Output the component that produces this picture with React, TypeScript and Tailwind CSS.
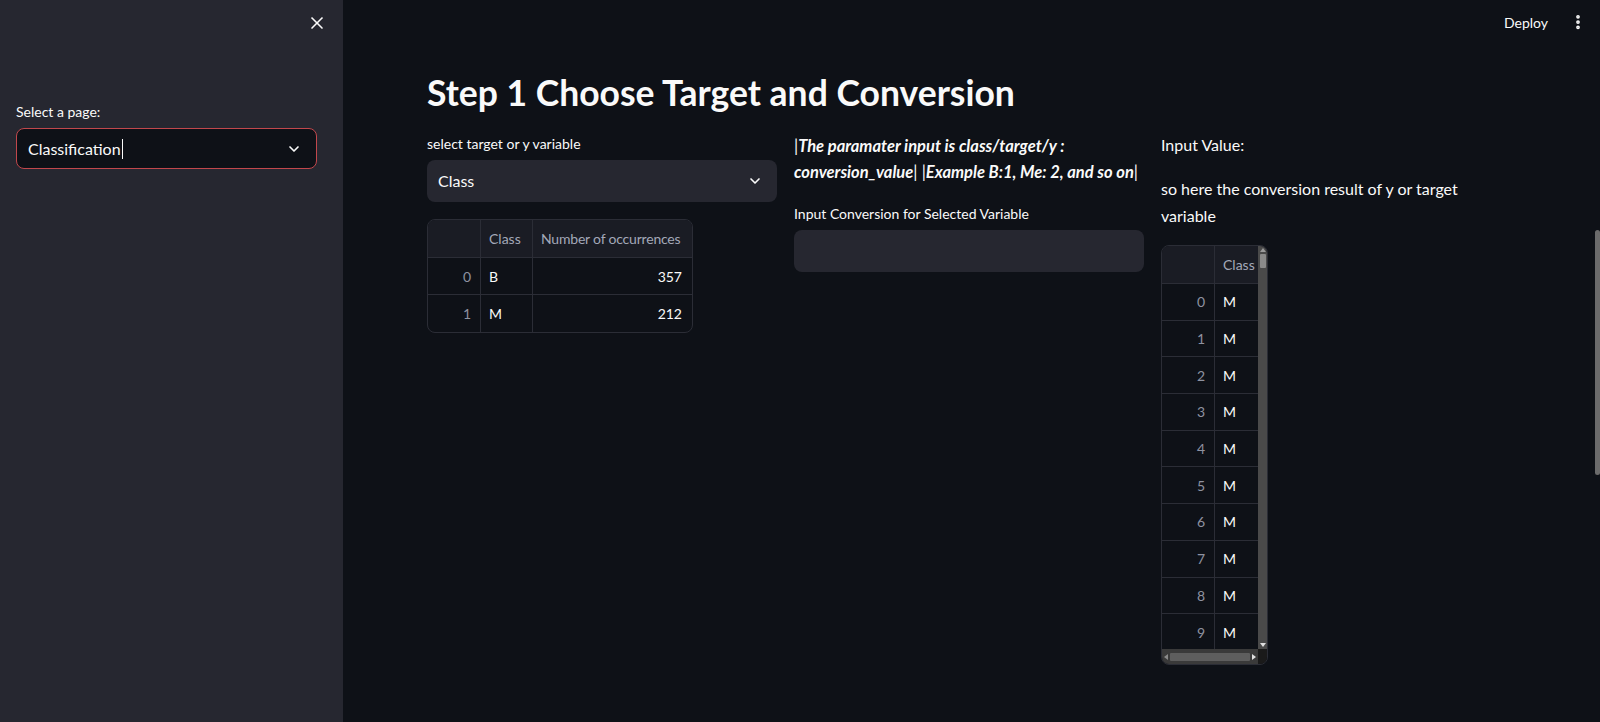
import React from 'react';
import { X, ChevronDown, EllipsisVertical } from 'lucide-react';

const font = { fontFamily: 'Lato, "Noto Sans", sans-serif' };

const counts = [
  { idx: 0, cls: 'B', n: 357 },
  { idx: 1, cls: 'M', n: 212 },
];

const converted = Array.from({ length: 10 }, (_, i) => i);

function Sidebar() {
  return (
    <aside className="w-[343px] shrink-0 bg-[#262730] h-[722px] flex flex-col">
      <div className="h-[46px] flex items-center justify-end pr-[16px]">
        <X size={20} strokeWidth={2} className="text-[#fafafa]" />
      </div>
      <div className="px-[16px] pt-[56px]">
        <div className="text-[14px] leading-[20px] text-[#fafafa]">Select a page:</div>
        <div className="mt-[6px] w-[301px] h-[41px] rounded-lg border border-[#c1474c] bg-[#0e1117] flex items-center justify-between pl-[11px] pr-[14px]">
          <span className="text-[16px] text-[#fafafa] flex items-center">
            Classification
            <span className="inline-block w-px h-[20px] bg-[#fafafa] ml-[1px]" />
          </span>
          <ChevronDown size={16} strokeWidth={2.5} className="text-[#fafafa]" />
        </div>
      </div>
    </aside>
  );
}

function CountsTable() {
  return (
    <div className="mt-[17px] w-[266px] rounded-lg border border-[#2b2d36] overflow-hidden text-[14px]">
      <div className="flex h-[38px] bg-[#1a1c24] border-b border-[#2b2d36] text-[#a3a8b8]">
        <div className="w-[53px] border-r border-[#2b2d36]" />
        <div className="w-[52px] border-r border-[#2b2d36] flex items-center px-[8px]">Class</div>
        <div className="flex-1 flex items-center pl-[8px] whitespace-nowrap tracking-[-0.2px]">Number of occurrences</div>
      </div>
      {counts.map((r, i) => (
        <div key={r.idx} className={`flex h-[37px] ${i === 0 ? 'border-b border-[#2b2d36]' : ''}`}>
          <div className="w-[53px] border-r border-[#2b2d36] flex items-center justify-end pr-[9px] text-[#8e92a0]">{r.idx}</div>
          <div className="w-[52px] border-r border-[#2b2d36] flex items-center px-[8px] text-[#fafafa]">{r.cls}</div>
          <div className="flex-1 flex items-center justify-end pr-[10px] text-[#fafafa]">{r.n}</div>
        </div>
      ))}
    </div>
  );
}

function ConvertedTable() {
  return (
    <div className="mt-[16px] w-[107px] h-[420px] rounded-lg border border-[#2b2d36] overflow-hidden flex flex-col text-[14px]">
      <div className="flex flex-1 min-h-0">
        <div className="flex-1 flex flex-col overflow-hidden">
          <div className="flex h-[38px] shrink-0 bg-[#1a1c24] border-b border-[#2b2d36] text-[#a3a8b8]">
            <div className="w-[53px] border-r border-[#2b2d36]" />
            <div className="flex-1 flex items-center pl-[8px]">Class</div>
          </div>
          {converted.map((i) => (
            <div key={i} className="flex h-[36.7px] shrink-0 border-b border-[#2b2d36]">
              <div className="w-[53px] border-r border-[#2b2d36] flex items-center justify-end pr-[9px] text-[#8e92a0]">{i}</div>
              <div className="flex-1 flex items-center pl-[8px] text-[#fafafa]">M</div>
            </div>
          ))}
          <div className="flex flex-1">
            <div className="w-[53px] border-r border-[#2b2d36]" />
          </div>
        </div>
        <div className="w-[9px] bg-[#4a4a4a] flex flex-col items-center justify-between py-[2px]">
          <div className="flex flex-col items-center gap-[2px]">
            <div className="w-0 h-0 border-l-[3px] border-r-[3px] border-b-[4px] border-l-transparent border-r-transparent border-b-[#9a9a9a]" />
            <div className="w-[6px] h-[14px] bg-[#8a8a8a] rounded-[1px]" />
          </div>
          <div className="w-0 h-0 border-l-[3px] border-r-[3px] border-t-[4px] border-l-transparent border-r-transparent border-t-[#e0e0e0]" />
        </div>
      </div>
      <div className="h-[15px] flex">
        <div className="flex-1 bg-[#3a3a3a] flex items-center px-[2px] gap-[2px]">
          <div className="w-0 h-0 border-t-[3px] border-b-[3px] border-r-[4px] border-t-transparent border-b-transparent border-r-[#8a8a8a]" />
          <div className="flex-1 h-[8px] bg-[#5e5e5e] rounded-[1px]" />
          <div className="w-0 h-0 border-t-[3px] border-b-[3px] border-l-[4px] border-t-transparent border-b-transparent border-l-[#e0e0e0]" />
        </div>
        <div className="w-[9px] bg-[#1a1a1a]" />
      </div>
    </div>
  );
}

export default function App() {
  return (
    <div className="w-[1600px] h-[722px] flex bg-[#0e1117] text-[#fafafa] overflow-hidden" style={font}>
      <Sidebar />
      <main className="flex-1 flex flex-col">
        <header className="h-[44px] flex items-center justify-end gap-[21px] pr-[13px]">
          <span className="text-[14px] text-[#fafafa]">Deploy</span>
          <EllipsisVertical size={18} strokeWidth={3} className="text-[#fafafa]" />
        </header>
        <div className="flex flex-1">
          <div className="flex-1 pl-[84px] pr-[84px]">
            <h1 className="text-[35.5px] font-bold leading-[44px] text-[#fafafa] pt-[27px]">
              Step 1 Choose Target and Conversion
            </h1>
            <div className="grid grid-cols-3 gap-[17px] w-[1084px] mt-[17px]">
              <div className="pt-[2px]">
                <div className="text-[14px] leading-[20px]">select target or y variable</div>
                <div className="mt-[6px] h-[42px] rounded-lg bg-[#262730] flex items-center justify-between pl-[11px] pr-[14px]">
                  <span className="text-[16px]">Class</span>
                  <ChevronDown size={16} strokeWidth={2.5} />
                </div>
                <CountsTable />
              </div>
              <div className="pt-[1px]">
                <div className="text-[16.5px] leading-[26px] font-bold">
                  <div>
                    <span className="font-normal">|</span>
                    <em>The paramater input is class/target/y :</em>
                  </div>
                  <div>
                    <em>conversion_value</em>
                    <span className="font-normal">| |</span>
                    <em>Example B:1, Me: 2, and so on</em>
                    <span className="font-normal">|</span>
                  </div>
                </div>
                <div className="mt-[19px] text-[14px] leading-[20px]">Input Conversion for Selected Variable</div>
                <div className="mt-[6px] h-[42px] rounded-lg bg-[#262730]" />
              </div>
              <div>
                <div className="text-[16px] leading-[26px]">Input Value:</div>
                <p className="mt-[17px] text-[16px] leading-[27px] w-[300px]">
                  so here the conversion result of y or target variable
                </p>
                <ConvertedTable />
              </div>
            </div>
          </div>
          <div className="w-[5px] flex flex-col pt-[186px]">
            <div className="h-[245px] w-[5px] rounded-full bg-[#6b6b6b]" />
          </div>
        </div>
      </main>
    </div>
  );
}
